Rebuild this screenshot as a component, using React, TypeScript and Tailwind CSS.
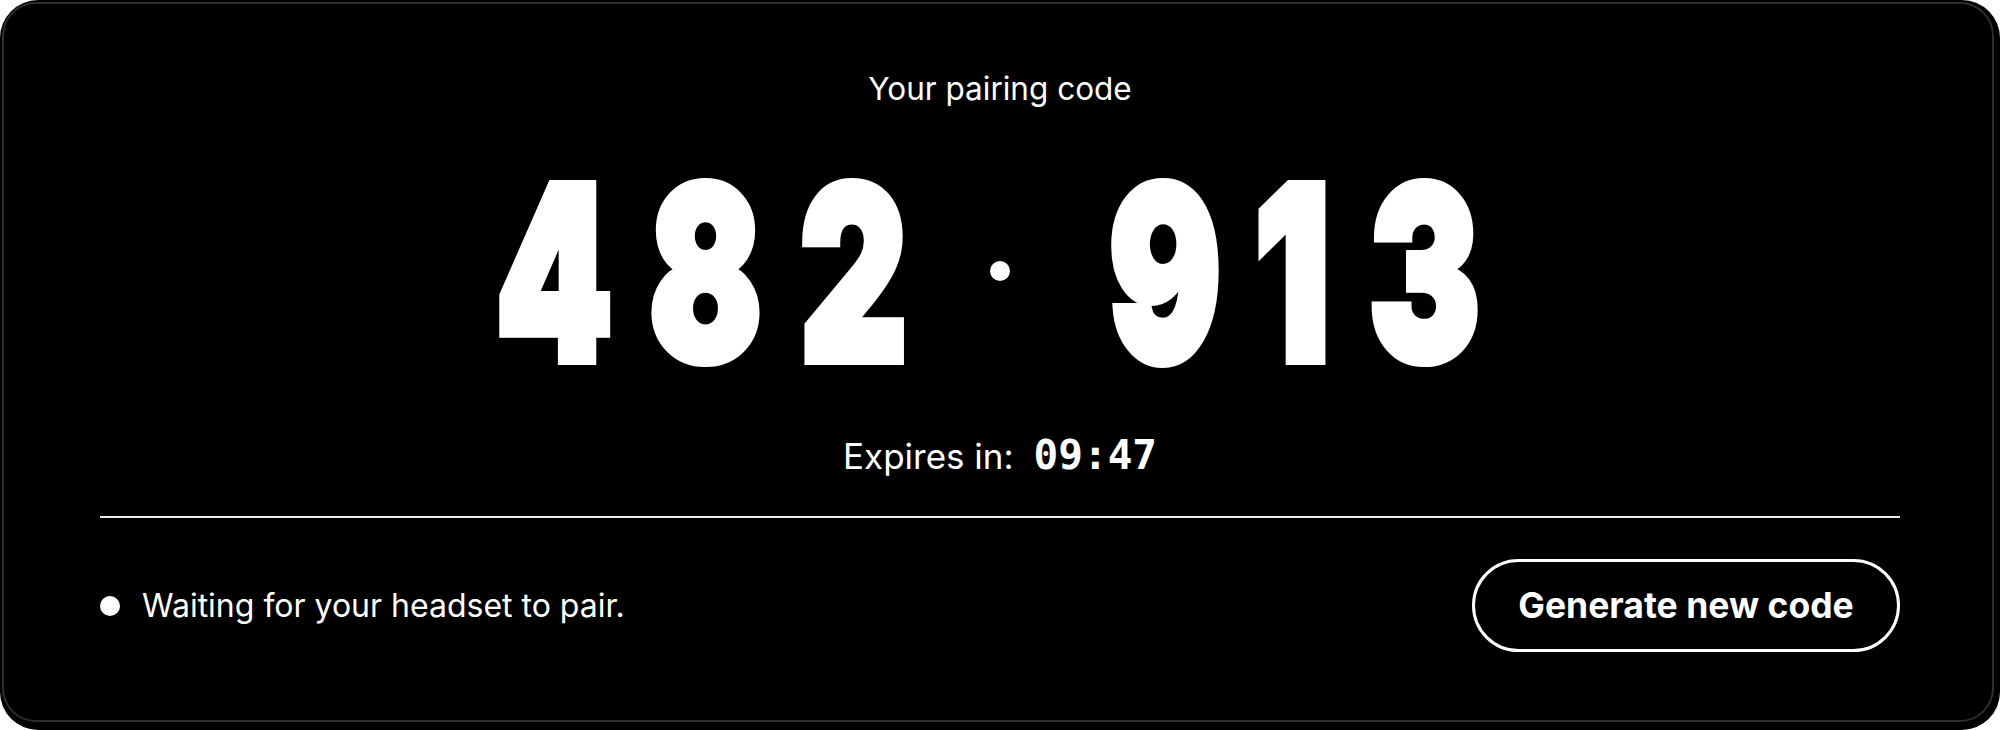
import React from "react";

const digitsA = [
  { c: "4", cls: "w-[114px]" },
  { c: "8", cls: "w-[108px] ml-[40px]" },
  { c: "2", cls: "w-[107px] ml-[41px]" },
];
const digitsB = [
  { c: "9", cls: "w-[106px]" },
  { c: "1", cls: "w-[69px] ml-[40px]" },
  { c: "3", cls: "w-[107px] ml-[44px]" },
];

function Digit({ c, cls }: { c: string; cls: string }) {
  return (
    <span className={`flex justify-center ${cls}`}>
      <span className="inline-block scale-x-[0.69] origin-center [-webkit-text-stroke:10px_white]">{c}</span>
    </span>
  );
}

export default function App() {
  return (
    <div className="w-[2000px] h-[730px] bg-white">
      <div className="relative w-[2000px] h-[730px] bg-black rounded-[38px] overflow-hidden font-[Inter,sans-serif] text-white">
        <div className="pointer-events-none absolute left-[2px] top-[2px] right-[6px] bottom-[8px] rounded-[34px] border-2 border-[#2e2e2e]" />
        <div className="flex flex-col px-[100px] pt-[72px]">
          <div className="text-center text-[31.5px] leading-[34px] font-normal">Your pairing code</div>

          <div className="mt-[47px] flex items-center justify-center pr-[25px] h-[240px] text-[240px] leading-none font-black">
            <div className="flex">
              {digitsA.map((d) => (
                <Digit key={d.c} c={d.c} cls={d.cls} />
              ))}
            </div>
            <span className="ml-[83px] mr-[102px] -mt-[4px] block w-[20px] h-[20px] rounded-full bg-white" />
            <div className="flex">
              {digitsB.map((d) => (
                <Digit key={d.c} c={d.c} cls={d.cls} />
              ))}
            </div>
          </div>

          <div className="mt-[42px] flex items-baseline justify-center leading-none">
            <span className="text-[35px] font-normal">Expires in:</span>
            <span className="ml-[20px] text-[41px] font-bold font-['DejaVu_Sans_Mono',monospace]">09:47</span>
          </div>

          <div className="mt-[40px] h-[2px] bg-[#ececec]" />

          <div className="mt-[41px] flex items-center justify-between">
            <div className="flex items-center">
              <span className="block w-[20px] h-[20px] rounded-full bg-white" />
              <span className="ml-[22px] text-[32px] leading-none font-normal">Waiting for your headset to pair.</span>
            </div>
            <button className="w-[428px] h-[93px] rounded-full border-[3px] border-white bg-black text-white text-[35.5px] font-bold leading-none flex items-center justify-center">
              Generate new code
            </button>
          </div>
        </div>
      </div>
    </div>
  );
}
